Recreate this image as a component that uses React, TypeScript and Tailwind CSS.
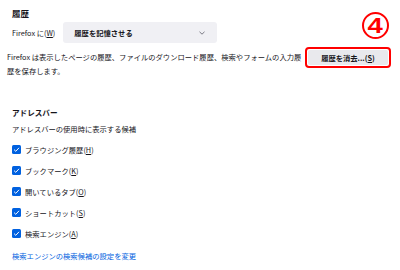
const font = { fontFamily: '"Noto Sans CJK JP", "Noto Sans", sans-serif' };

const Key = ({ k }: { k: string }) => (
  <>
    (<span className="underline underline-offset-1">{k}</span>)
  </>
);

const CheckRow = ({ label, k }: { label: string; k: string }) => (
  <div className="flex items-center h-[21px] gap-[4px]">
    <span className="w-[9px] h-[9px] rounded-[1.5px] bg-[#0061e0] flex items-center justify-center">
      <svg width="7" height="7" viewBox="0 0 10 10">
        <path d="M1.5 5.2 L4 7.6 L8.6 2.6" fill="none" stroke="white" strokeWidth="1.4" />
      </svg>
    </span>
    <span>
      {label}
      <Key k={k} />
    </span>
  </div>
);

export default function App() {
  const items = [
    { label: "ブラウジング履歴", k: "H" },
    { label: "ブックマーク", k: "K" },
    { label: "開いているタブ", k: "O" },
    { label: "ショートカット", k: "S" },
    { label: "検索エンジン", k: "A" },
  ];

  return (
    <div
      className="relative w-[400px] h-[270px] bg-white text-[#15141a] text-[7.3px] leading-[12px] overflow-hidden pl-[12px] pt-[7px]"
      style={font}
    >
      <div className="text-[8.5px] font-bold">履歴</div>

      <div className="mt-[3px] flex items-center gap-[8px]">
        <span>
          Firefox に<Key k="W" />
        </span>
        <div className="w-[154px] h-[21px] rounded-[3px] bg-[#f0f0f4] flex items-center justify-between pl-[11px] pr-[12px]">
          <span className="font-semibold">履歴を記憶させる</span>
          <svg width="6" height="4" viewBox="0 0 6 4">
            <path d="M0.5 0.8 L3 3.2 L5.5 0.8" fill="none" stroke="#5b5b66" strokeWidth="0.8" />
          </svg>
        </div>
      </div>

      <div className="mt-[7px] flex items-start -ml-[5px]">
        <p className="w-[297px] leading-[14px]">
          Firefox は表示したページの履歴、ファイルのダウンロード履歴、検索やフォームの入力履歴を保存します。
        </p>
        <div className="ml-[1px] mt-[-3px] border-[2px] border-[#ff0000] rounded-[4px] p-[1px]">
          <div className="w-[80px] h-[15px] rounded-[2px] bg-[#e9e9ed] flex items-center justify-center font-semibold">
            履歴を消去...<Key k="S" />
          </div>
        </div>
      </div>

      <div className="mt-[29px] text-[7.6px] font-bold">アドレスバー</div>
      <div className="mt-[4px]">アドレスバーの使用時に表示する候補</div>

      <div className="mt-[4px]">
        {items.map((it) => (
          <CheckRow key={it.label} label={it.label} k={it.k} />
        ))}
      </div>

      <div className="mt-[6px] text-[#0061e0]">検索エンジンの検索候補の設定を変更</div>

      <div className="absolute left-[362px] top-[12px] w-[27px] h-[27px] rounded-full border-[2px] border-[#ff0000] flex items-center justify-center">
        <span
          className="text-[#ff0000] text-[22px] font-bold leading-none scale-x-[1.25] mt-[1px]"
          style={{ fontFamily: '"Liberation Sans", sans-serif' }}
        >
          4
        </span>
      </div>
    </div>
  );
}
